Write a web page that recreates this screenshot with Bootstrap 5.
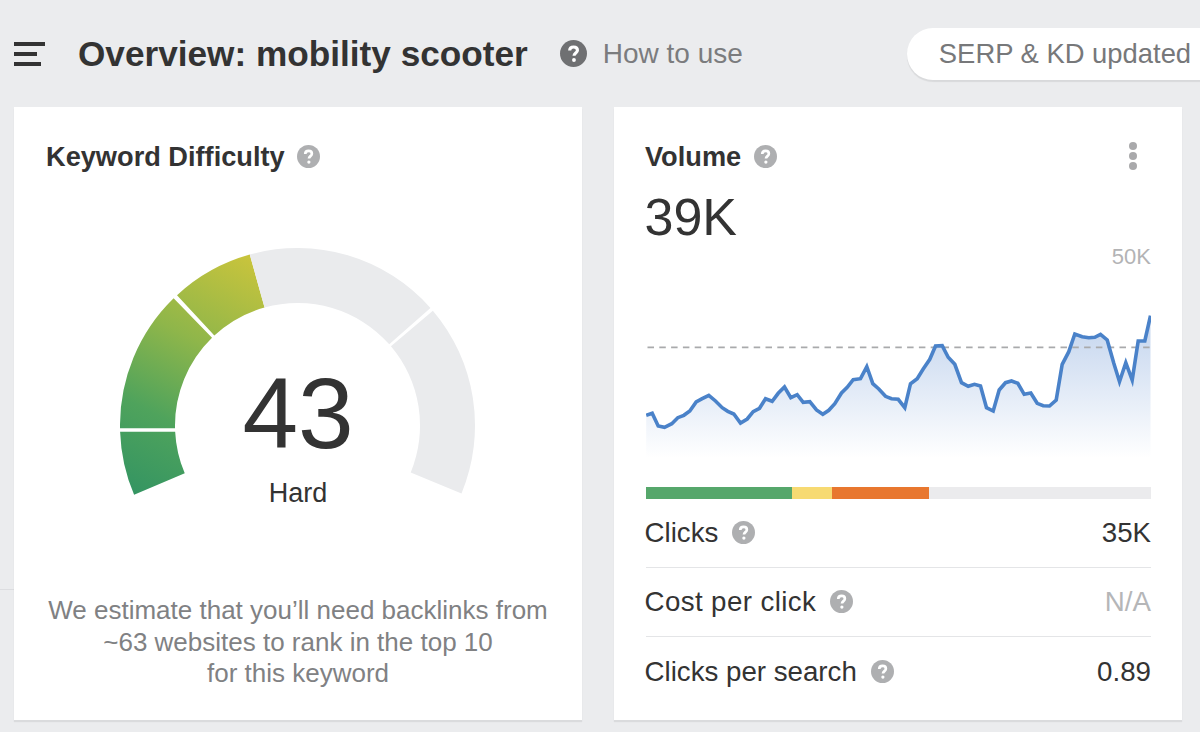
<!DOCTYPE html>
<html lang="en">
<head>
<meta charset="utf-8">
<title>Overview: mobility scooter</title>
<link rel="stylesheet" href="https://cdn.jsdelivr.net/npm/bootstrap@5.3.0/dist/css/bootstrap.min.css">
<style>
html,body{height:732px;overflow:hidden}
body{background:#ebecee;font-family:"Liberation Sans",Arial,sans-serif;color:#333;-webkit-font-smoothing:antialiased}
body::before{content:"";position:absolute;left:0;top:589px;width:14px;height:1px;background:#dcdde0}
.topbar{height:107px;padding-left:14px}
.burger{width:31px;height:24px;margin-right:33px;flex:none}
.burger span{display:block;height:4px;background:#333}
.burger span:nth-child(2){width:23px}
.burger span:nth-child(3){width:27px}
.page-title{font-size:35.2px;font-weight:700;line-height:40px;margin:0;color:#333;white-space:nowrap}
.q-dark{width:27px;height:27px;margin-left:32px;margin-right:16px;flex:none}
.howto{font-size:28px;color:#7b7c7e;white-space:nowrap}
.serp-pill{margin-left:164px;height:52px;width:320px;flex:none;background:#fff;border-radius:26px 0 0 26px;padding-left:32px;font-size:27.4px;line-height:52px;color:#77787a;white-space:nowrap;box-shadow:0 2px 1px rgba(0,0,0,.08);align-self:center}
.panels{padding-left:14px;gap:32px}
.panel{width:568px;height:613px;flex:none;background:#fff;box-shadow:0 2px 1px rgba(0,0,0,.07)}
.panel-head{padding:32px 32px 0;height:66px}
.vol-head{padding-left:31px}
.vol-head .q-soft{margin-left:13px}
.panel-title{font-size:27.2px;font-weight:700;line-height:36px;margin:0;color:#333}
.q-soft{width:23px;height:23px;margin-left:12px;flex:none}
.panel-head .q-soft{margin-top:6px}
.kebab{margin-left:auto;margin-right:13px;padding-top:3px}
.kebab i{display:block;width:8px;height:8px;border-radius:50%;background:#a9a9ab;margin-bottom:2px}
.gauge-wrap{position:relative;height:320px;padding-left:106px;padding-top:72px}
.gauge-wrap svg{display:block}
.gauge-num{position:absolute;left:0;right:0;top:189px;text-align:center;font-size:100px;line-height:102px;color:#333}
.gauge-label{position:absolute;left:0;right:0;top:303px;text-align:center;font-size:27px;line-height:34px;color:#333}
.kd-note{margin:102px 0 0;text-align:center;font-size:26px;line-height:31.5px;color:#808183}
.vol-body{padding:0 31px 0 31.5px}
.vol-big{font-size:52px;line-height:60px;color:#333;margin:14px 0 0 -1px}
.vol-max{font-size:22px;line-height:24px;color:#b3b3b5;text-align:right;margin-top:-2px}
.vol-chart{display:block;margin-top:3px}
.kd-bar{height:12px;border-radius:0;background:#ebebed}
.seg-g{background:#56a76b}.seg-y{background:#f7da72}.seg-o{background:#e8772f}
.stat-row{height:69px;font-size:27.7px;border-bottom:1px solid #e4e5e7;color:#333}
.stat-row:last-child{border-bottom:0}
.stat-name{margin-left:-1px}
.stat-name .q-soft{margin-left:14px}
.stat-wide{letter-spacing:.4px}
.val-na{color:#b5b6b8}
</style>
</head>
<body>
<header class="topbar d-flex align-items-center">
  <div class="burger d-flex flex-column justify-content-between"><span></span><span></span><span></span></div>
  <h1 class="page-title">Overview: mobility scooter</h1>
  <svg class="q-dark" viewBox="0 0 24 24"><circle cx="12" cy="12" r="12" fill="#6f7072"/><path d="M8.600 9.400c0-2 1.500-3.200 3.500-3.200s3.400 1.100 3.400 2.900c0 2.500-3 2.500-3 5" fill="none" stroke="#fff" stroke-width="2.800"/><circle cx="12.400" cy="17.800" r="1.700" fill="#fff"/></svg>
  <span class="howto">How to use</span>
  <div class="serp-pill">SERP &amp; KD updated</div>
</header>
<main class="panels d-flex">
  <section class="panel card border-0 rounded-0">
    <div class="panel-head d-flex align-items-start">
      <h2 class="panel-title">Keyword Difficulty</h2>
      <svg class="q-soft" viewBox="0 0 24 24"><circle cx="12" cy="12" r="12" fill="#aeafb1"/><path d="M8.600 9.400c0-2 1.500-3.200 3.500-3.200s3.400 1.100 3.400 2.900c0 2.500-3 2.500-3 5" fill="none" stroke="#fff" stroke-width="2.800"/><circle cx="12.400" cy="17.800" r="1.700" fill="#fff"/></svg>
    </div>
    <div class="gauge-wrap">
      <svg width="356" height="250" viewBox="120 245 356 250">
        <defs>
          <linearGradient id="gg" gradientUnits="userSpaceOnUse" x1="140" y1="495" x2="262" y2="262">
            <stop offset="0" stop-color="#359562"/>
            <stop offset=".3" stop-color="#4fa35c"/>
            <stop offset=".62" stop-color="#8fb64a"/>
            <stop offset="1" stop-color="#c9c43c"/>
          </linearGradient>
        </defs>
        <path fill="url(#gg)" d="M134.100 494.850A177.500 177.500 0 0 1 120.100 431.700L175.160 431.700A122.500 122.500 0 0 0 184.740 473.360Z"/>
        <path fill="url(#gg)" d="M120.020 428.300A177.500 177.500 0 0 1 173.640 298.360L212.020 337.750A122.500 122.500 0 0 0 175.030 428.300Z"/>
        <path fill="url(#gg)" d="M177.010 295.160A177.500 177.500 0 0 1 249.770 254.530L264.560 307.510A122.500 122.500 0 0 0 214.350 335.550Z"/>
        <path fill="#eaebed" d="M249.770 254.530A177.500 177.500 0 0 1 430.450 307.900L389.250 344.330A122.500 122.500 0 0 0 264.560 307.510Z"/>
        <path fill="#eaebed" d="M432.880 310.700A177.500 177.500 0 0 1 461.500 493.400L410.700 472.400A122.500 122.500 0 0 0 390.930 346.270Z"/>
      </svg>
      <div class="gauge-num">43</div>
      <div class="gauge-label">Hard</div>
    </div>
    <p class="kd-note">We estimate that you’ll need backlinks from<br>~63 websites to rank in the top 10<br>for this keyword</p>
  </section>
  <section class="panel card border-0 rounded-0">
    <div class="panel-head vol-head d-flex align-items-start">
      <h2 class="panel-title">Volume</h2>
      <svg class="q-soft" viewBox="0 0 24 24"><circle cx="12" cy="12" r="12" fill="#aeafb1"/><path d="M8.600 9.400c0-2 1.500-3.200 3.500-3.200s3.400 1.100 3.400 2.900c0 2.500-3 2.500-3 5" fill="none" stroke="#fff" stroke-width="2.800"/><circle cx="12.400" cy="17.800" r="1.700" fill="#fff"/></svg>
      <div class="kebab"><i></i><i></i><i></i></div>
    </div>
    <div class="vol-body">
      <div class="vol-big">39K</div>
      <div class="vol-max">50K</div>
      <svg class="vol-chart" width="505.500" height="215" viewBox="645.500 272 505.500 215">
        <defs>
          <linearGradient id="ag" gradientUnits="userSpaceOnUse" x1="0" y1="320" x2="0" y2="458">
            <stop offset="0" stop-color="#c4d5ee"/>
            <stop offset="1" stop-color="#ffffff"/>
          </linearGradient>
        </defs>
        <path fill="url(#ag)" d="M645.700 458L645.700 415.300 651.700 413.300 657.700 426 664 427.300 671.300 423.700 677.300 417.700 683.300 415.300 689.300 411 695.700 402 701.700 398.700 708.300 395.300 715 401 721.700 407.700 727.300 411.300 733.300 414 740 423 746.700 419 752.700 411.700 759 408.300 765 398.700 771.700 401.300 777.700 393.300 784 387 790.300 397.700 796.700 394.700 802.700 402.300 809.300 401.700 816 410 822.300 414.300 828.300 410.300 834.300 403.700 841 393 846.700 387.300 852.700 379.700 860 378.700 866.300 366.700 872.300 383.700 878.300 389 885 396.300 891 398.700 897.700 399.300 904.300 407.700 910 383.700 916.700 378.700 922.700 369 929.300 359.300 935 346 941.700 345.700 947.700 357.300 954.300 364.300 961 382.700 967.700 386.300 974 384.300 980 386 986 407.700 992.700 411 998.700 390 1005 382.700 1011 381 1017.300 383.300 1023.700 394.300 1030.300 393 1036.700 403.300 1042.700 405.700 1049 406 1055.700 400 1061.700 364.300 1068.300 351.700 1074.300 334 1081.700 336.700 1088.300 337.700 1094.300 337.300 1100 334.300 1106.700 340 1113.300 363.300 1119 381.700 1125.300 362.700 1131.700 380 1137.700 341 1144.300 341 1150 315.700L1150 458Z"/>
        <line x1="647" y1="347.300" x2="1150" y2="347.300" stroke="#a9aaac" stroke-width="1.800" stroke-dasharray="6.500 5.300"/>
        <polyline fill="none" stroke="#4a82c9" stroke-width="3.600" stroke-linejoin="miter" points="645.700,415.300 651.700,413.300 657.700,426 664,427.300 671.300,423.700 677.300,417.700 683.300,415.300 689.300,411 695.700,402 701.700,398.700 708.300,395.300 715,401 721.700,407.700 727.300,411.300 733.300,414 740,423 746.700,419 752.700,411.700 759,408.300 765,398.700 771.700,401.300 777.700,393.300 784,387 790.300,397.700 796.700,394.700 802.700,402.300 809.300,401.700 816,410 822.300,414.300 828.300,410.300 834.300,403.700 841,393 846.700,387.300 852.700,379.700 860,378.700 866.300,366.700 872.300,383.700 878.300,389 885,396.300 891,398.700 897.700,399.300 904.300,407.700 910,383.700 916.700,378.700 922.700,369 929.300,359.300 935,346 941.700,345.700 947.700,357.300 954.300,364.300 961,382.700 967.700,386.300 974,384.300 980,386 986,407.700 992.700,411 998.700,390 1005,382.700 1011,381 1017.300,383.300 1023.700,394.300 1030.300,393 1036.700,403.300 1042.700,405.700 1049,406 1055.700,400 1061.700,364.300 1068.300,351.700 1074.300,334 1081.700,336.700 1088.300,337.700 1094.300,337.300 1100,334.300 1106.700,340 1113.300,363.300 1119,381.700 1125.300,362.700 1131.700,380 1137.700,341 1144.300,341 1150,315.700"/>
      </svg>
      <div class="progress kd-bar">
        <div class="progress-bar seg-g" style="width:28.900%"></div>
        <div class="progress-bar seg-y" style="width:8%"></div>
        <div class="progress-bar seg-o" style="width:19.200%"></div>
      </div>
      <div class="stat-row d-flex align-items-center justify-content-between">
        <span class="stat-name d-flex align-items-center">Clicks <svg class="q-soft" viewBox="0 0 24 24"><circle cx="12" cy="12" r="12" fill="#aeafb1"/><path d="M8.600 9.400c0-2 1.500-3.200 3.500-3.200s3.400 1.100 3.400 2.900c0 2.500-3 2.500-3 5" fill="none" stroke="#fff" stroke-width="2.800"/><circle cx="12.400" cy="17.800" r="1.700" fill="#fff"/></svg></span>
        <span>35K</span>
      </div>
      <div class="stat-row d-flex align-items-center justify-content-between">
        <span class="stat-name stat-wide d-flex align-items-center">Cost per click <svg class="q-soft" viewBox="0 0 24 24"><circle cx="12" cy="12" r="12" fill="#aeafb1"/><path d="M8.600 9.400c0-2 1.500-3.200 3.500-3.200s3.400 1.100 3.400 2.900c0 2.500-3 2.500-3 5" fill="none" stroke="#fff" stroke-width="2.800"/><circle cx="12.400" cy="17.800" r="1.700" fill="#fff"/></svg></span>
        <span class="val-na">N/A</span>
      </div>
      <div class="stat-row d-flex align-items-center justify-content-between">
        <span class="stat-name d-flex align-items-center">Clicks per search <svg class="q-soft" viewBox="0 0 24 24"><circle cx="12" cy="12" r="12" fill="#aeafb1"/><path d="M8.600 9.400c0-2 1.500-3.200 3.500-3.200s3.400 1.100 3.400 2.900c0 2.500-3 2.500-3 5" fill="none" stroke="#fff" stroke-width="2.800"/><circle cx="12.400" cy="17.800" r="1.700" fill="#fff"/></svg></span>
        <span>0.89</span>
      </div>
    </div>
  </section>
</main>
<script src="https://cdn.jsdelivr.net/npm/bootstrap@5.3.0/dist/js/bootstrap.bundle.min.js"></script>
</body>
</html>
